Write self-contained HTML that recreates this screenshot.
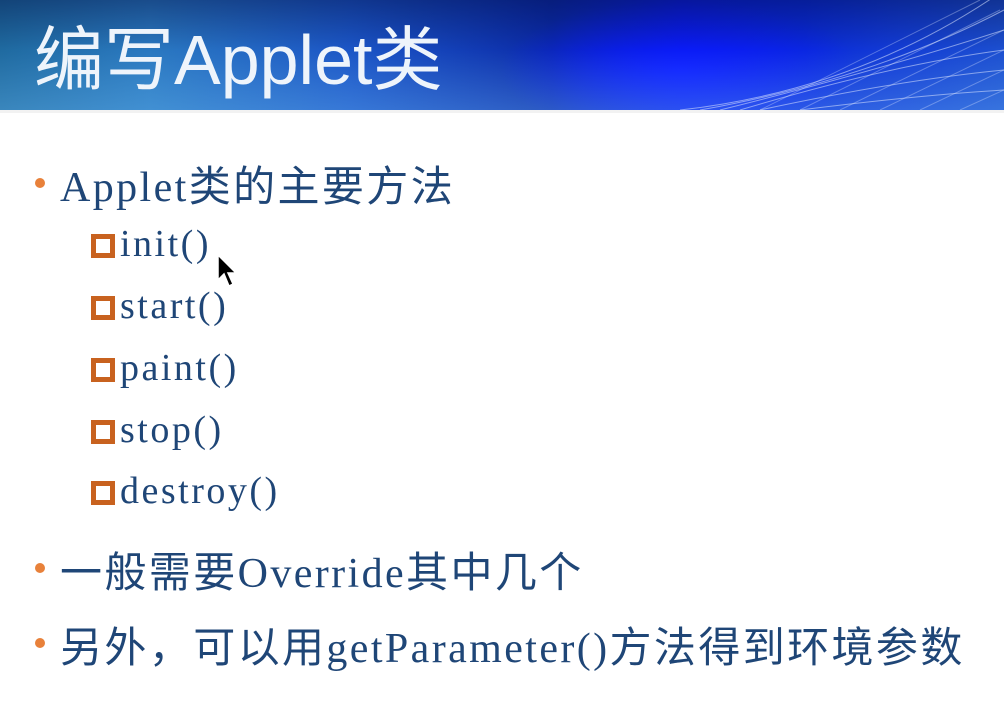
<!DOCTYPE html>
<html><head><meta charset="utf-8"><style>
html,body{margin:0;padding:0;width:1004px;height:726px;overflow:hidden;background:#fff}
.hdr{position:absolute;left:0;top:0;width:1004px;height:110px;overflow:hidden;
background:radial-gradient(ellipse 180px 70px at 680px 70px,#0a1aff 0%,rgba(10,30,240,0) 100%),
linear-gradient(90deg,#1f6aa0 0%,#2a78c0 15%,#1b55c6 35%,#0b2aa8 55%,#0b1ee0 68%,#0a2ad8 80%,#1c4fd0 100%);}
.hdr .shade{position:absolute;left:0;top:0;width:1004px;height:110px;background:linear-gradient(180deg,rgba(0,10,60,.4) 0%,rgba(0,0,0,0) 45%,rgba(120,200,255,.3) 100%)}
.title{position:absolute;left:34px;top:4px;font:70px "Liberation Sans","Noto Sans CJK SC",sans-serif;color:#eef4fb}
.t{position:absolute;font-family:"Liberation Serif","Noto Sans CJK SC",serif;color:#1f4677;white-space:nowrap}
.m{font-size:42px;letter-spacing:2.4px}
.s{font-size:38px;letter-spacing:2.5px}
.b{position:absolute;width:10px;height:10px;border-radius:50%;background:#e8813a}
.sq{position:absolute;width:14px;height:14px;border:5px solid #c8621f;background:#fff}
</style></head><body>
<div class="hdr"><div class="shade"></div>
<svg width="1004" height="110" style="position:absolute;left:0;top:0">
<g stroke="rgba(220,230,255,.55)" fill="none" stroke-width="1">
<path d="M680 110 Q860 90 1004 -10"/><path d="M700 110 Q870 80 1004 10"/>
<path d="M720 110 Q880 70 1004 30"/><path d="M740 110 Q890 65 1004 50"/>
<path d="M760 110 Q900 80 1004 70"/><path d="M800 110 Q920 95 1004 90"/>
</g>
<g stroke="rgba(220,230,255,.35)" stroke-width="1">
<path d="M760 110 L980 0M800 110 L1000 10M840 110 L1004 30M880 110 L1004 50M920 110 L1004 70M960 110 L1004 90"/>
</g></svg>
<div class="title">编写Applet类</div></div>
<div style="position:absolute;left:0;top:110px;width:1004px;height:3px;background:#f2f2f2"></div>

<div class="b" style="left:35px;top:178px"></div>
<div class="t m" style="left:60px;top:153px">Applet类的主要方法</div>

<div class="sq" style="left:91px;top:234px"></div>
<div class="t s" style="left:120px;top:222px">init()</div>
<div class="sq" style="left:91px;top:296px"></div>
<div class="t s" style="left:120px;top:284px">start()</div>
<div class="sq" style="left:91px;top:358px"></div>
<div class="t s" style="left:120px;top:346px">paint()</div>
<div class="sq" style="left:91px;top:420px"></div>
<div class="t s" style="left:120px;top:408px">stop()</div>
<div class="sq" style="left:91px;top:481px"></div>
<div class="t s" style="left:120px;top:469px">destroy()</div>

<div class="b" style="left:35px;top:563px"></div>
<div class="t m" style="left:60px;top:539px">一般需要Override其中几个</div>
<div class="b" style="left:35px;top:638px"></div>
<div class="t m" style="left:60px;top:614px">另外，可以用getParameter()方法得到环境参数</div>

<svg width="22" height="36" style="position:absolute;left:217px;top:254px"><path d="M1 1 L1 26 L7 20 L12 32 L16 30 L11 19 L19 19 Z" fill="#000" stroke="#fff" stroke-width="1.5"/></svg>
</body></html>
